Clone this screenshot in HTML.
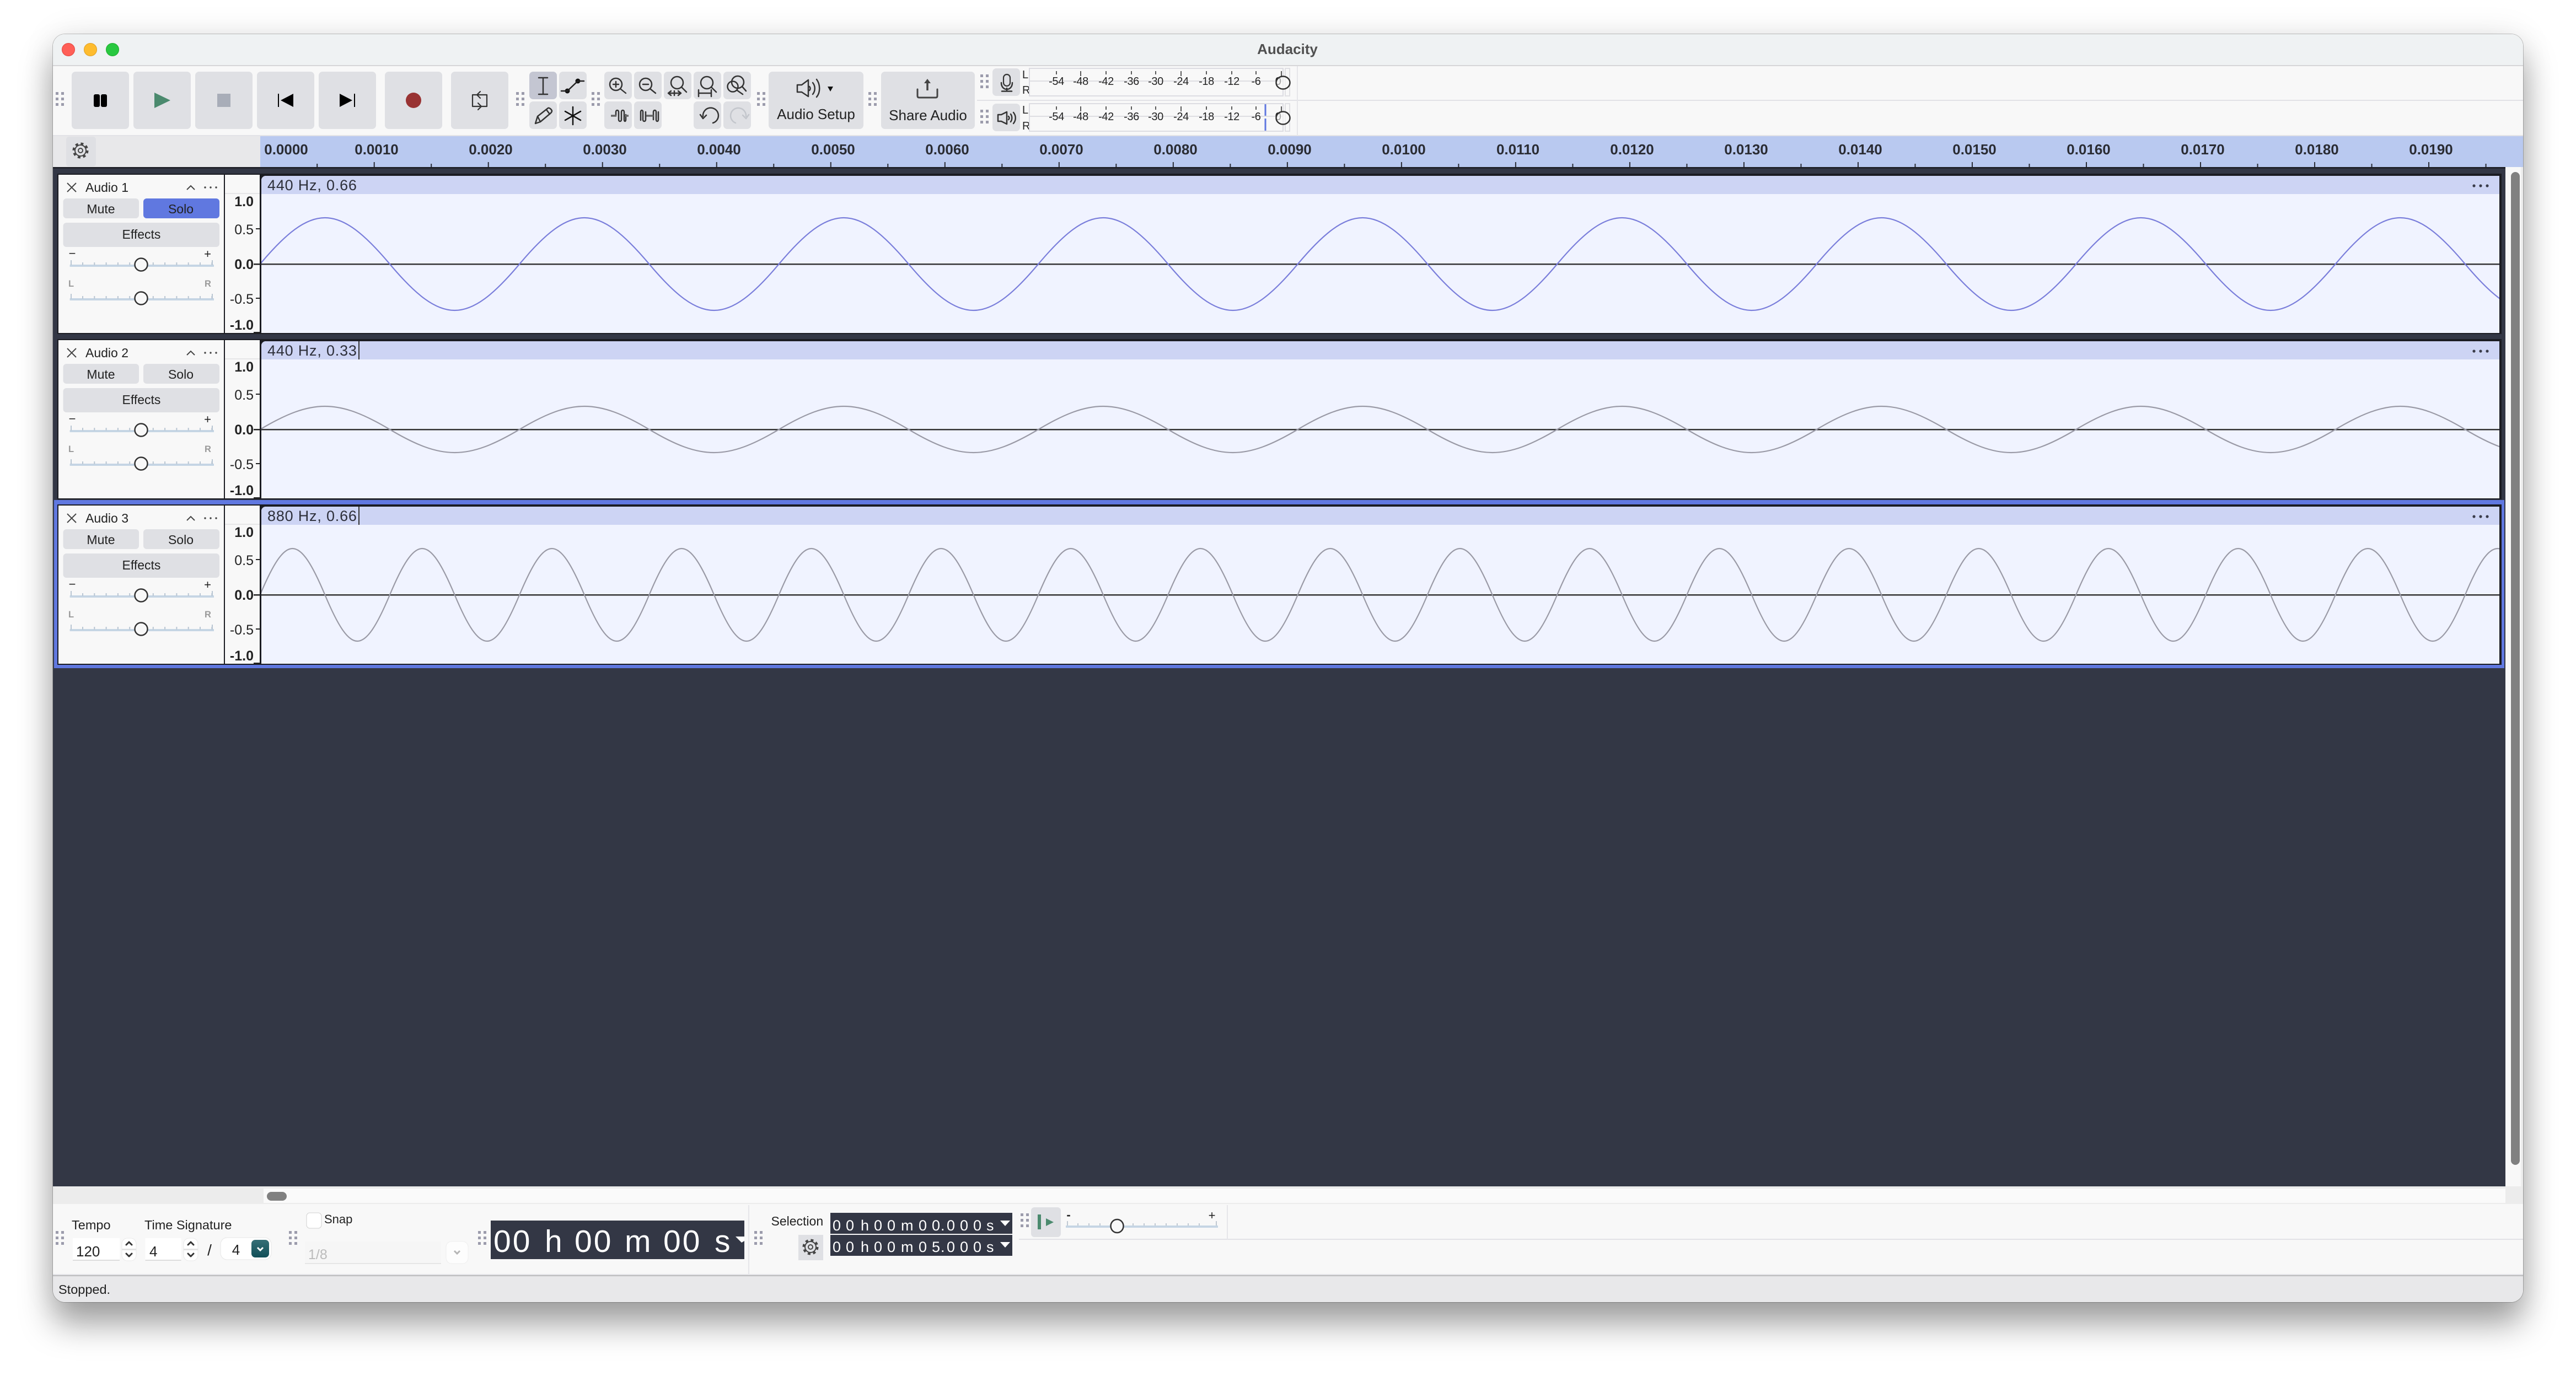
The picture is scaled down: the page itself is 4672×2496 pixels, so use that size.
<!DOCTYPE html>
<html><head><meta charset="utf-8"><title>Audacity</title>
<style>
html,body{margin:0;padding:0;background:#fff;width:4672px;height:2496px;overflow:hidden}
#shadow{position:absolute;left:96px;top:62px;width:4480px;height:2300px;border-radius:22px;box-shadow:0 40px 60px rgba(0,0,0,.36),0 0 60px rgba(0,0,0,.09),0 0 0 1px rgba(0,0,0,.22)}
svg{position:absolute;left:0;top:0}
text{font-family:"Liberation Sans",sans-serif;fill:#222}
.b{font-weight:bold}
.m{text-anchor:middle}
.e{text-anchor:end}
.ic{fill:none;stroke:#333;stroke-width:2.5;stroke-linecap:round;stroke-linejoin:round}
.btn{fill:#dfe0e4}
.r{font-size:26px;font-weight:bold;text-anchor:middle;fill:#2a2c33}
.v{font-size:25px;text-anchor:end;fill:#222}
.t{font-size:23px}
.h{font-size:27px;letter-spacing:.8px;fill:#2d2f3a}
.lr{font-size:16.5px;font-weight:bold;fill:#999;text-anchor:middle}
.mt{font-size:20px;text-anchor:middle;fill:#222;letter-spacing:-.4px}
.d{font-size:27px;fill:#fff;letter-spacing:9px}
.big{font-size:57px;fill:#fff;letter-spacing:3px}
</style></head><body>
<div id="shadow"></div>
<svg width="4672" height="2496" viewBox="0 0 4672 2496" xmlns="http://www.w3.org/2000/svg">
<defs>
<clipPath id="win"><rect x="96" y="62" width="4480" height="2300" rx="22"/></clipPath>
<clipPath id="wc"><rect x="0" y="0" width="4059" height="285"/></clipPath>
<g id="grip" fill="#9c9cac"><rect x="0" y="0" width="5" height="5"/><rect x="10" y="0" width="5" height="5"/><rect x="0" y="10" width="5" height="5"/><rect x="10" y="10" width="5" height="5"/><rect x="0" y="20" width="5" height="5"/><rect x="10" y="20" width="5" height="5"/></g>
<g id="gear" fill="none" stroke="#444"><circle r="10" stroke-width="2"/><circle r="12.5" stroke-width="4" stroke-dasharray="4.9 4.92"/><circle r="4" stroke-width="2"/></g>
<g id="slider"><rect x="126.6" y="480" width="261.4" height="4" fill="#c5d5e4"/><path d="M129 472v9M385 472v9M150 476v5m21.3-5v5m21.3-5v5m21.3-5v5m21.3-5v5m42.6-5v5m21.3-5v5m21.3-5v5m21.3-5v5m21.3-5v5m21.3-5v5" stroke="#b9c6d3" stroke-width="2" fill="none"/><ellipse cx="256" cy="480" rx="11.5" ry="11.5" fill="#f8f8f8" stroke="#333" stroke-width="2.5"/></g>
<g id="track">
<rect x="104" y="315" width="4433" height="291" fill="#1b1c22"/>
<rect x="106" y="317" width="300" height="287" fill="#f8f8f8"/>
<rect x="408" y="317" width="63" height="287" fill="#f8f8f8"/>
<rect x="408" y="350" width="63" height="2" fill="#e6e6e8"/>
<path d="M474 350V327a8 8 0 0 1 8-8H4533V604H474Z" fill="#f0f3ff"/>
<path d="M474 352V327a8 8 0 0 1 8-8H4533V352Z" fill="#cdd4f4"/>
<rect x="464" y="414" width="7" height="2" fill="#222"/><rect x="460" y="478" width="11" height="2.5" fill="#222"/><rect x="464" y="540" width="7" height="2" fill="#222"/><rect x="460" y="602" width="11" height="3" fill="#222"/>
<circle cx="4487" cy="337" r="2.6" fill="#3a3c4a"/><circle cx="4499" cy="337" r="2.6" fill="#3a3c4a"/><circle cx="4511" cy="337" r="2.6" fill="#3a3c4a"/>
<path d="M122 332L138 348M138 332L122 348" stroke="#444" stroke-width="2" fill="none"/>
<path d="M339 344L346 337L353 344" stroke="#444" stroke-width="2" fill="none"/>
<circle cx="372" cy="340" r="1.7" fill="#444"/><circle cx="382" cy="340" r="1.7" fill="#444"/><circle cx="392" cy="340" r="1.7" fill="#444"/>
<rect x="114.5" y="360" width="137.5" height="36" rx="6" class="btn"/>
<rect x="114.5" y="404" width="283.5" height="44" rx="6" class="btn"/>
<use href="#slider"/><use href="#slider" y="61"/>
<rect x="474" y="478" width="4059" height="2.5" fill="#333"/>
</g>
</defs>
<g clip-path="url(#win)">
<rect x="96" y="62" width="4480" height="2300" fill="#f8f8f8"/>
<rect x="96" y="62" width="4480" height="56" fill="#eff2f3"/>
<rect x="96" y="118" width="4480" height="2" fill="#d6d6d8"/>
<circle cx="124" cy="90" r="11.5" fill="#ff5f57" stroke="#e2463f" stroke-width="1"/>
<circle cx="164" cy="90" r="11.5" fill="#febc2e" stroke="#dfa023" stroke-width="1"/>
<circle cx="204" cy="90" r="11.5" fill="#28c840" stroke="#1dad2b" stroke-width="1"/>
<text x="2335" y="98" class="b m" font-size="26" style="fill:#505050">Audacity</text>
<rect x="1772" y="181" width="2804" height="2" fill="#e2e2e6"/>
<rect x="96" y="245" width="4480" height="2" fill="#e2e2e6"/>
<rect x="2352" y="120" width="2" height="126" fill="#e6e6ea"/>

<use href="#grip" x="101" y="167"/><use href="#grip" x="936" y="167"/><use href="#grip" x="1073" y="167"/><use href="#grip" x="1373" y="167"/><use href="#grip" x="1575" y="167"/><use href="#grip" x="1778" y="135"/><use href="#grip" x="1778" y="199"/>

<rect x="130" y="130" width="104" height="104" rx="7" class="btn"/><rect x="242" y="130" width="104" height="104" rx="7" class="btn"/><rect x="354" y="130" width="104" height="104" rx="7" class="btn"/><rect x="466" y="130" width="104" height="104" rx="7" class="btn"/><rect x="578" y="130" width="104" height="104" rx="7" class="btn"/><rect x="698" y="130" width="104" height="104" rx="7" class="btn"/><rect x="818" y="130" width="104" height="104" rx="7" class="btn"/>
<rect x="170" y="171" width="11" height="23" rx="3" fill="#000"/><rect x="183" y="171" width="11" height="23" rx="3" fill="#000"/>
<path d="M280 168L309 182L280 196Z" fill="#4b8a6e"/>
<rect x="394" y="170" width="24" height="24" fill="#a8adb8"/>
<rect x="504" y="170" width="2" height="24" fill="#000"/><path d="M532 170V194L509 182Z" fill="#000"/>
<rect x="642" y="170" width="2" height="24" fill="#000"/><path d="M616 170V194L639 182Z" fill="#000"/>
<circle cx="750" cy="182" r="14" fill="#993333"/>
<path class="ic" style="stroke-width:2.2" d="M857 193V172H883V193H857M871 166L865 172L871 178M867 187L873 193L867 199"/>

<rect x="960" y="130" width="50" height="50" rx="7" fill="#c4c6d2"/><rect x="1014" y="130" width="50" height="50" rx="7" class="btn"/><rect x="960" y="184" width="50" height="50" rx="7" class="btn"/><rect x="1014" y="184" width="50" height="50" rx="7" class="btn"/>
<path class="ic" d="M977 141H993M985 141V171M977 171H993" stroke-width="2.5"/>
<circle cx="1048" cy="147" r="4.5" fill="#111"/><circle cx="1029" cy="165" r="4.5" fill="#111"/>
<path class="ic" d="M1029 165L1048 147M1048 147H1059M1018 165H1029" style="stroke:#222"/>
<path class="ic" d="M971 224L975 211L994 196C996 195 1000 198 1001 201C1001 202 1000 204 999 205L980 221ZM975 211L980 221M991 199L997 207" stroke-width="2"/>
<path class="ic" d="M1039 194V226M1025 202L1053 218M1053 202L1025 218" style="stroke:#111"/>

<rect x="1096" y="130" width="50" height="50" rx="7" class="btn"/><rect x="1150" y="130" width="50" height="50" rx="7" class="btn"/><rect x="1204" y="130" width="50" height="50" rx="7" class="btn"/><rect x="1258" y="130" width="50" height="50" rx="7" class="btn"/><rect x="1312" y="130" width="50" height="50" rx="7" class="btn"/>
<rect x="1096" y="184" width="50" height="50" rx="7" class="btn"/><rect x="1150" y="184" width="50" height="50" rx="7" class="btn"/><rect x="1258" y="184" width="50" height="50" rx="7" class="btn"/><rect x="1312" y="184" width="50" height="50" rx="7" class="btn"/>
<g class="ic" stroke-width="2.2">
<circle cx="1117" cy="153" r="11"/><path d="M1125 161L1135 169M1112 153H1122M1117 148V158" stroke-width="2.4"/>
<circle cx="1171" cy="153" r="11"/><path d="M1179 161L1189 169M1166 153H1176"/>
<circle cx="1228" cy="150" r="11"/><path d="M1236 158L1245 167M1212 169H1235M1217 165L1212 169L1217 173M1230 165L1235 169L1230 173M1223 165V173"/>
<circle cx="1282" cy="150" r="11"/><path d="M1290 158L1299 167M1267 169H1290M1267 163V175M1290 163V175"/>
<circle cx="1338" cy="149" r="11"/><circle cx="1329" cy="157" r="9.5"/><path d="M1346 157L1353 165M1337 164L1347 171"/>
<path d="M1117 210V203C1117 199 1122 199 1122 203V217C1122 221 1127 221 1127 217V203C1127 199 1132 199 1132 203V217C1132 221 1135 221 1135 217V208"/>
<path d="M1162 218V203C1162 199 1166 199 1166 203V217C1166 221 1171 221 1171 217V203M1185 217V203C1185 199 1190 199 1190 203V217C1190 221 1194 221 1194 217V203"/>
</g>
<path d="M1108 210H1118M1133 210H1140M1172 210H1185" stroke="#666" stroke-width="3.5" fill="none"/>
<path class="ic" d="M1275 211A14 14 0 1 1 1293 223M1270 208L1275 215L1281 209"/>
<path class="ic" style="stroke:#c3c6cc" d="M1353 211A14 14 0 1 0 1334 223M1347 209L1353 215L1358 208"/>

<rect x="1394" y="130" width="172" height="104" rx="7" class="btn"/><rect x="1598" y="130" width="170" height="104" rx="7" class="btn"/>
<path class="ic" d="M1446 154H1454L1466 145V175L1454 167H1446ZM1468 157C1470 159 1470 162 1468 164M1474 150C1479 156 1479 165 1474 171M1481 144C1488 153 1488 168 1481 176"/>
<path d="M1501 157H1511L1506 166Z" fill="#111"/>
<text x="1480" y="216" class="m" font-size="26">Audio Setup</text>
<path class="ic" style="stroke-width:3;stroke:#444" d="M1664 162V174Q1664 177 1667 177H1697Q1700 177 1700 174V162"/>
<path d="M1682 146V164" stroke="#444" stroke-width="3.5" fill="none"/><path d="M1676 151L1682 143L1688 151Z" fill="#444"/>
<text x="1683" y="218" class="m" font-size="26">Share Audio</text>

<rect x="1800" y="124" width="50" height="50" rx="7" class="btn"/><rect x="1800" y="188" width="50" height="50" rx="7" class="btn"/>
<rect x="1820" y="135" width="12" height="21" rx="6" fill="none" stroke="#333" stroke-width="2.2"/>
<path class="ic" d="M1816 150C1816 166 1836 166 1836 150M1826 160V165M1817 165.5H1835" stroke-width="2.2"/>
<path class="ic" d="M1810 208H1816L1826 203V225L1816 220H1810ZM1829 211C1831 213 1831 215 1829 217M1833 207C1836 211 1836 217 1833 221M1838 204C1843 210 1843 218 1838 224" stroke-width="2.2"/>
<text x="1854" y="142" font-size="20">L</text><text x="1854" y="170" font-size="20">R</text>
<text x="1854" y="206" font-size="20">L</text><text x="1854" y="235" font-size="20">R</text>
<rect x="1867" y="124" width="460" height="50" fill="none" stroke="#dcdce2" stroke-width="2"/><rect x="1867" y="188" width="460" height="50" fill="none" stroke="#dcdce2" stroke-width="2"/>
<rect x="2331" y="124" width="8" height="50" fill="none" stroke="#e0e0e4" stroke-width="2"/><rect x="2331" y="188" width="8" height="50" fill="none" stroke="#e0e0e4" stroke-width="2"/>
<path d="M1867 147H2327M1867 211H2327" stroke="#dedee2" stroke-width="2"/>
<path d="M1916 129v6M1960 129v9M2006 129v6M2052 129v6M2096 129v6M2142 129v9M2188 129v6M2234 129v6M2278 129v6M2324 129v9M1916 193v6M1960 193v9M2006 193v6M2052 193v6M2096 193v6M2142 193v9M2188 193v6M2234 193v6M2278 193v6M2324 193v9" stroke="#333" stroke-width="1.6" fill="none"/>
<text x="1916" y="154" class="mt">-54</text><text x="1960" y="154" class="mt">-48</text><text x="2006" y="154" class="mt">-42</text><text x="2052" y="154" class="mt">-36</text><text x="2096" y="154" class="mt">-30</text><text x="2142" y="154" class="mt">-24</text><text x="2188" y="154" class="mt">-18</text><text x="2234" y="154" class="mt">-12</text><text x="2278" y="154" class="mt">-6</text><text x="2318" y="154" class="mt">0</text>
<text x="1916" y="218" class="mt">-54</text><text x="1960" y="218" class="mt">-48</text><text x="2006" y="218" class="mt">-42</text><text x="2052" y="218" class="mt">-36</text><text x="2096" y="218" class="mt">-30</text><text x="2142" y="218" class="mt">-24</text><text x="2188" y="218" class="mt">-18</text><text x="2234" y="218" class="mt">-12</text><text x="2278" y="218" class="mt">-6</text><text x="2318" y="218" class="mt">0</text>
<ellipse cx="2327" cy="150" rx="12.5" ry="11.5" fill="#f8f8f8" fill-opacity=".6" stroke="#333" stroke-width="2.5"/><ellipse cx="2327" cy="214" rx="12.5" ry="11.5" fill="#f8f8f8" fill-opacity=".6" stroke="#333" stroke-width="2.5"/>
<path d="M2295 189V210M2295 215V237" stroke="#6078e0" stroke-width="3" fill="none"/>

<rect x="96" y="247" width="376" height="56" fill="#e8e8ea"/><rect x="472" y="247" width="4104" height="56" fill="#b9c9f0"/>
<rect x="120" y="248" width="54" height="54" rx="5" fill="#dfe0e4"/>
<use href="#gear" x="146" y="273"/>
<path d="M678.7 294v9m207.02-9v9m207.02-9v9m207.02-9v9m207.02-9v9m207.02-9v9m207.02-9v9m207.02-9v9m207.02-9v9m207.02-9v9m207.02-9v9m207.02-9v9m207.02-9v9m207.02-9v9m207.02-9v9m207.02-9v9m207.02-9v9m207.02-9v9m207.02-9v9" stroke="#2a2c36" stroke-width="2" fill="none"/>
<path d="M575.2 297v6m207.02-6v6m207.02-6v6m207.02-6v6m207.02-6v6m207.02-6v6m207.02-6v6m207.02-6v6m207.02-6v6m207.02-6v6m207.02-6v6m207.02-6v6m207.02-6v6m207.02-6v6m207.02-6v6m207.02-6v6m207.02-6v6m207.02-6v6m207.02-6v6m207.02-6v6" stroke="#2a2c36" stroke-width="2" fill="none"/>
<text x="519" y="280" class="r">0.0000</text><text x="683" y="280" class="r">0.0010</text><text x="890" y="280" class="r">0.0020</text><text x="1097" y="280" class="r">0.0030</text><text x="1304" y="280" class="r">0.0040</text><text x="1511" y="280" class="r">0.0050</text><text x="1718" y="280" class="r">0.0060</text><text x="1925" y="280" class="r">0.0070</text><text x="2132" y="280" class="r">0.0080</text><text x="2339" y="280" class="r">0.0090</text><text x="2546" y="280" class="r">0.0100</text><text x="2753" y="280" class="r">0.0110</text><text x="2960" y="280" class="r">0.0120</text><text x="3167" y="280" class="r">0.0130</text><text x="3374" y="280" class="r">0.0140</text><text x="3581" y="280" class="r">0.0150</text><text x="3788" y="280" class="r">0.0160</text><text x="3995" y="280" class="r">0.0170</text><text x="4202" y="280" class="r">0.0180</text><text x="4409" y="280" class="r">0.0190</text>

<rect x="96" y="303" width="4448" height="1849" fill="#333745"/>
<rect x="96" y="303" width="4448" height="2.5" fill="#1c1d24"/>
<rect x="4544" y="303" width="32" height="1849" fill="#f8f8f8"/><rect x="4572" y="303" width="4" height="1849" fill="#eeeeee"/>
<rect x="4554" y="312" width="16" height="1801" rx="8" fill="#808080"/>

<rect x="98" y="907" width="4444" height="305" fill="#6078e0"/>
<use href="#track"/><use href="#track" y="300"/><use href="#track" y="600"/>

<g><text x="155" y="348" class="t">Audio 1</text><rect x="260" y="360" width="138" height="36" rx="6" fill="#6078e0"/><text x="183" y="387" class="t m">Mute</text><text x="328" y="387" class="t m">Solo</text><text x="256.5" y="433" class="t m">Effects</text>
<text x="131" y="467" font-size="22" class="m">−</text><text x="376.6" y="468" font-size="22" class="m">+</text><text x="129" y="520" class="lr">L</text><text x="377" y="520" class="lr">R</text>
<text x="460" y="374" class="v b">1.0</text><text x="460" y="425" class="v">0.5</text><text x="460" y="488" class="v b">0.0</text><text x="460" y="551" class="v">-0.5</text><text x="460" y="598" class="v b">-1.0</text>
<text x="485" y="345" class="h">440 Hz, 0.66</text></g>

<g><text x="155" y="648" class="t">Audio 2</text><rect x="260" y="660" width="138" height="36" rx="6" class="btn"/><text x="183" y="687" class="t m">Mute</text><text x="328" y="687" class="t m">Solo</text><text x="256.5" y="733" class="t m">Effects</text>
<text x="131" y="767" font-size="22" class="m">−</text><text x="376.6" y="768" font-size="22" class="m">+</text><text x="129" y="820" class="lr">L</text><text x="377" y="820" class="lr">R</text>
<text x="460" y="674" class="v b">1.0</text><text x="460" y="725" class="v">0.5</text><text x="460" y="788" class="v b">0.0</text><text x="460" y="851" class="v">-0.5</text><text x="460" y="898" class="v b">-1.0</text>
<text x="485" y="645" class="h">440 Hz, 0.33</text><rect x="650" y="619" width="2" height="33" fill="#333"/></g>

<g><text x="155" y="948" class="t">Audio 3</text><rect x="260" y="960" width="138" height="36" rx="6" class="btn"/><text x="183" y="987" class="t m">Mute</text><text x="328" y="987" class="t m">Solo</text><text x="256.5" y="1033" class="t m">Effects</text>
<text x="131" y="1067" font-size="22" class="m">−</text><text x="376.6" y="1068" font-size="22" class="m">+</text><text x="129" y="1120" class="lr">L</text><text x="377" y="1120" class="lr">R</text>
<text x="460" y="974" class="v b">1.0</text><text x="460" y="1025" class="v">0.5</text><text x="460" y="1088" class="v b">0.0</text><text x="460" y="1151" class="v">-0.5</text><text x="460" y="1198" class="v b">-1.0</text>
<text x="485" y="945" class="h">880 Hz, 0.66</text><rect x="650" y="919" width="2" height="33" fill="#333"/></g>

<g transform="translate(474,319)"><g clip-path="url(#wc)">
<path fill="none" stroke="#7a7edb" stroke-width="2.2" d="M-2.3 160c94.1-112 141.15-112 235.25 0c94.1 112 141.15 112 235.25 0c94.1-112 141.15-112 235.25 0c94.1 112 141.15 112 235.25 0c94.1-112 141.15-112 235.25 0c94.1 112 141.15 112 235.25 0c94.1-112 141.15-112 235.25 0c94.1 112 141.15 112 235.25 0c94.1-112 141.15-112 235.25 0c94.1 112 141.15 112 235.25 0c94.1-112 141.15-112 235.25 0c94.1 112 141.15 112 235.25 0c94.1-112 141.15-112 235.25 0c94.1 112 141.15 112 235.25 0c94.1-112 141.15-112 235.25 0c94.1 112 141.15 112 235.25 0c94.1-112 141.15-112 235.25 0c94.1 112 141.15 112 235.25 0"/>
</g></g>
<g transform="translate(474,619)"><g clip-path="url(#wc)">
<path fill="none" stroke="#9a9aa6" stroke-width="2.2" d="M-2.3 160c94.1-56 141.15-56 235.25 0c94.1 56 141.15 56 235.25 0c94.1-56 141.15-56 235.25 0c94.1 56 141.15 56 235.25 0c94.1-56 141.15-56 235.25 0c94.1 56 141.15 56 235.25 0c94.1-56 141.15-56 235.25 0c94.1 56 141.15 56 235.25 0c94.1-56 141.15-56 235.25 0c94.1 56 141.15 56 235.25 0c94.1-56 141.15-56 235.25 0c94.1 56 141.15 56 235.25 0c94.1-56 141.15-56 235.25 0c94.1 56 141.15 56 235.25 0c94.1-56 141.15-56 235.25 0c94.1 56 141.15 56 235.25 0c94.1-56 141.15-56 235.25 0c94.1 56 141.15 56 235.25 0"/>
</g></g>
<g transform="translate(474,919)"><g clip-path="url(#wc)">
<path fill="none" stroke="#9a9aa6" stroke-width="2.2" d="M-2.3 160c47.05-112 70.575-112 117.625 0c47.05 112 70.575 112 117.625 0c47.05-112 70.575-112 117.625 0c47.05 112 70.575 112 117.625 0c47.05-112 70.575-112 117.625 0c47.05 112 70.575 112 117.625 0c47.05-112 70.575-112 117.625 0c47.05 112 70.575 112 117.625 0c47.05-112 70.575-112 117.625 0c47.05 112 70.575 112 117.625 0c47.05-112 70.575-112 117.625 0c47.05 112 70.575 112 117.625 0c47.05-112 70.575-112 117.625 0c47.05 112 70.575 112 117.625 0c47.05-112 70.575-112 117.625 0c47.05 112 70.575 112 117.625 0c47.05-112 70.575-112 117.625 0c47.05 112 70.575 112 117.625 0c47.05-112 70.575-112 117.625 0c47.05 112 70.575 112 117.625 0c47.05-112 70.575-112 117.625 0c47.05 112 70.575 112 117.625 0c47.05-112 70.575-112 117.625 0c47.05 112 70.575 112 117.625 0c47.05-112 70.575-112 117.625 0c47.05 112 70.575 112 117.625 0c47.05-112 70.575-112 117.625 0c47.05 112 70.575 112 117.625 0c47.05-112 70.575-112 117.625 0c47.05 112 70.575 112 117.625 0c47.05-112 70.575-112 117.625 0c47.05 112 70.575 112 117.625 0c47.05-112 70.575-112 117.625 0c47.05 112 70.575 112 117.625 0c47.05-112 70.575-112 117.625 0c47.05 112 70.575 112 117.625 0"/>
</g></g>

<rect x="96" y="2152" width="4480" height="32" fill="#ececec"/>
<rect x="478" y="2156" width="4066" height="26" fill="#fafafa"/>
<rect x="484" y="2162" width="36" height="16" rx="8" fill="#808080"/>

<rect x="96" y="2184" width="4480" height="128" fill="#f8f8f8"/>
<rect x="1848" y="2247" width="2728" height="2" fill="#e2e2e6"/>
<rect x="96" y="2311" width="4480" height="2" fill="#e4e4e8"/>
<rect x="96" y="2313" width="4480" height="2" fill="#bcbcbe"/>
<rect x="96" y="2315" width="4480" height="47" fill="#e8e8ea"/>
<rect x="1357" y="2186" width="2" height="126" fill="#e6e6ea"/><rect x="2225" y="2186" width="2" height="62" fill="#e6e6ea"/>
<text x="106" y="2347" font-size="23.5">Stopped.</text>

<use href="#grip" x="101" y="2233"/><use href="#grip" x="524" y="2233"/><use href="#grip" x="867" y="2233"/><use href="#grip" x="1368" y="2233"/><use href="#grip" x="1851" y="2201"/>
<text x="130" y="2230" font-size="23.5">Tempo</text><text x="262" y="2230" font-size="23.5">Time Signature</text>
<rect x="132" y="2246" width="85" height="41" fill="#fff"/><rect x="132" y="2285" width="85" height="2" fill="#ddd"/>
<text x="138" y="2279" font-size="26">120</text>
<rect x="221" y="2246" width="26" height="41" rx="10" fill="#fff" stroke="#e8e8e8"/><rect x="221" y="2265" width="26" height="3" fill="#e4e4e4"/>
<path class="ic" d="M229 2258L234 2253L239 2258M229 2274L234 2279L239 2274" style="stroke-width:3"/>
<rect x="263.5" y="2246" width="65" height="41" fill="#fff"/><rect x="263.5" y="2285" width="65" height="2" fill="#ddd"/>
<text x="271" y="2279" font-size="26">4</text>
<rect x="333" y="2246" width="26" height="41" rx="10" fill="#fff" stroke="#e8e8e8"/><rect x="333" y="2265" width="26" height="3" fill="#e4e4e4"/>
<path class="ic" d="M341 2258L346 2253L351 2258M341 2274L346 2279L351 2274" style="stroke-width:3"/>
<text x="380" y="2277" font-size="28" class="m">/</text>
<rect x="400" y="2245" width="92" height="40" rx="12" fill="#fff" stroke="#e6e6e6"/>
<text x="428" y="2276" font-size="26" class="m">4</text>
<defs><linearGradient id="cb" x1="0" y1="0" x2="0" y2="1"><stop offset="0" stop-color="#356f76"/><stop offset="1" stop-color="#114f58"/></linearGradient></defs>
<rect x="456" y="2249" width="32" height="32" rx="7" fill="url(#cb)"/>
<path d="M467 2263L472 2268L477 2263" stroke="#fff" stroke-width="3" fill="none"/>
<rect x="556" y="2200" width="27" height="28" rx="6" fill="#fff" stroke="#cfcfcf"/>
<text x="588" y="2219" font-size="22">Snap</text>
<rect x="553" y="2252" width="247" height="41" fill="#f6f6f6"/><rect x="553" y="2291" width="247" height="2" fill="#e6e6e6"/>
<text x="559" y="2284" font-size="25" style="fill:#bbb">1/8</text>
<rect x="809" y="2252" width="40" height="40" rx="10" fill="#fdfdfd" stroke="#eeeeee"/>
<path d="M824 2269L829 2274L834 2269" stroke="#b5b5b5" stroke-width="3" fill="none"/>

<rect x="890" y="2214" width="460" height="70" fill="#333745"/>
<text x="895" y="2271" class="big">00</text><text x="988" y="2271" class="big">h</text><text x="1042" y="2271" class="big">00</text><text x="1133" y="2271" class="big">m</text><text x="1203" y="2271" class="big">00</text><text x="1296" y="2271" class="big">s</text>
<path d="M1334 2243H1350V2251L1345 2254Z" fill="#fff"/>

<text x="1398.5" y="2223" font-size="23">Selection</text>
<rect x="1506" y="2200" width="330" height="38" fill="#333745"/><rect x="1506" y="2240" width="330" height="38" fill="#333745"/>
<text x="1510" y="2232" class="d">00</text><text x="1561" y="2232" class="d">h</text><text x="1585" y="2232" class="d">00</text><text x="1634" y="2232" class="d">m</text><text x="1666" y="2232" class="d">00</text><text x="1706" y="2232" class="d">.</text><text x="1717" y="2232" class="d">000</text><text x="1789" y="2232" class="d">s</text>
<text x="1510" y="2271" class="d">00</text><text x="1561" y="2271" class="d">h</text><text x="1585" y="2271" class="d">00</text><text x="1634" y="2271" class="d">m</text><text x="1666" y="2271" class="d">05</text><text x="1706" y="2271" class="d">.</text><text x="1717" y="2271" class="d">000</text><text x="1789" y="2271" class="d">s</text>
<path d="M1814 2214H1832L1823 2224ZM1814 2253H1832L1823 2263Z" fill="#fff"/>
<rect x="1448" y="2240" width="45" height="46" fill="#dfe0e4"/>
<use href="#gear" x="1470" y="2262"/>

<rect x="1870" y="2190" width="54" height="54" rx="6" class="btn"/>
<rect x="1882" y="2203" width="6" height="27" fill="#4b8a6e"/><path d="M1897 2210L1911 2217L1897 2224Z" fill="#4b8a6e"/>
<text x="1938" y="2211" font-size="22" class="m b">-</text><text x="2198" y="2212" font-size="22" class="m">+</text>
<rect x="1933" y="2223" width="276" height="4" fill="#c5d5e4"/>
<path d="M1936 2215v8M2206 2215v8M1955 2219v4m20-4v4m20-4v4m20-4v4m40-4v4m20-4v4m20-4v4m20-4v4m20-4v4m20-4v4m20-4v4" stroke="#c0c8d2" stroke-width="2" fill="none"/>
<ellipse cx="2026" cy="2224" rx="11.5" ry="12" fill="#f8f8f8" stroke="#333" stroke-width="2.5"/>
</g>
</svg>
</body></html>
